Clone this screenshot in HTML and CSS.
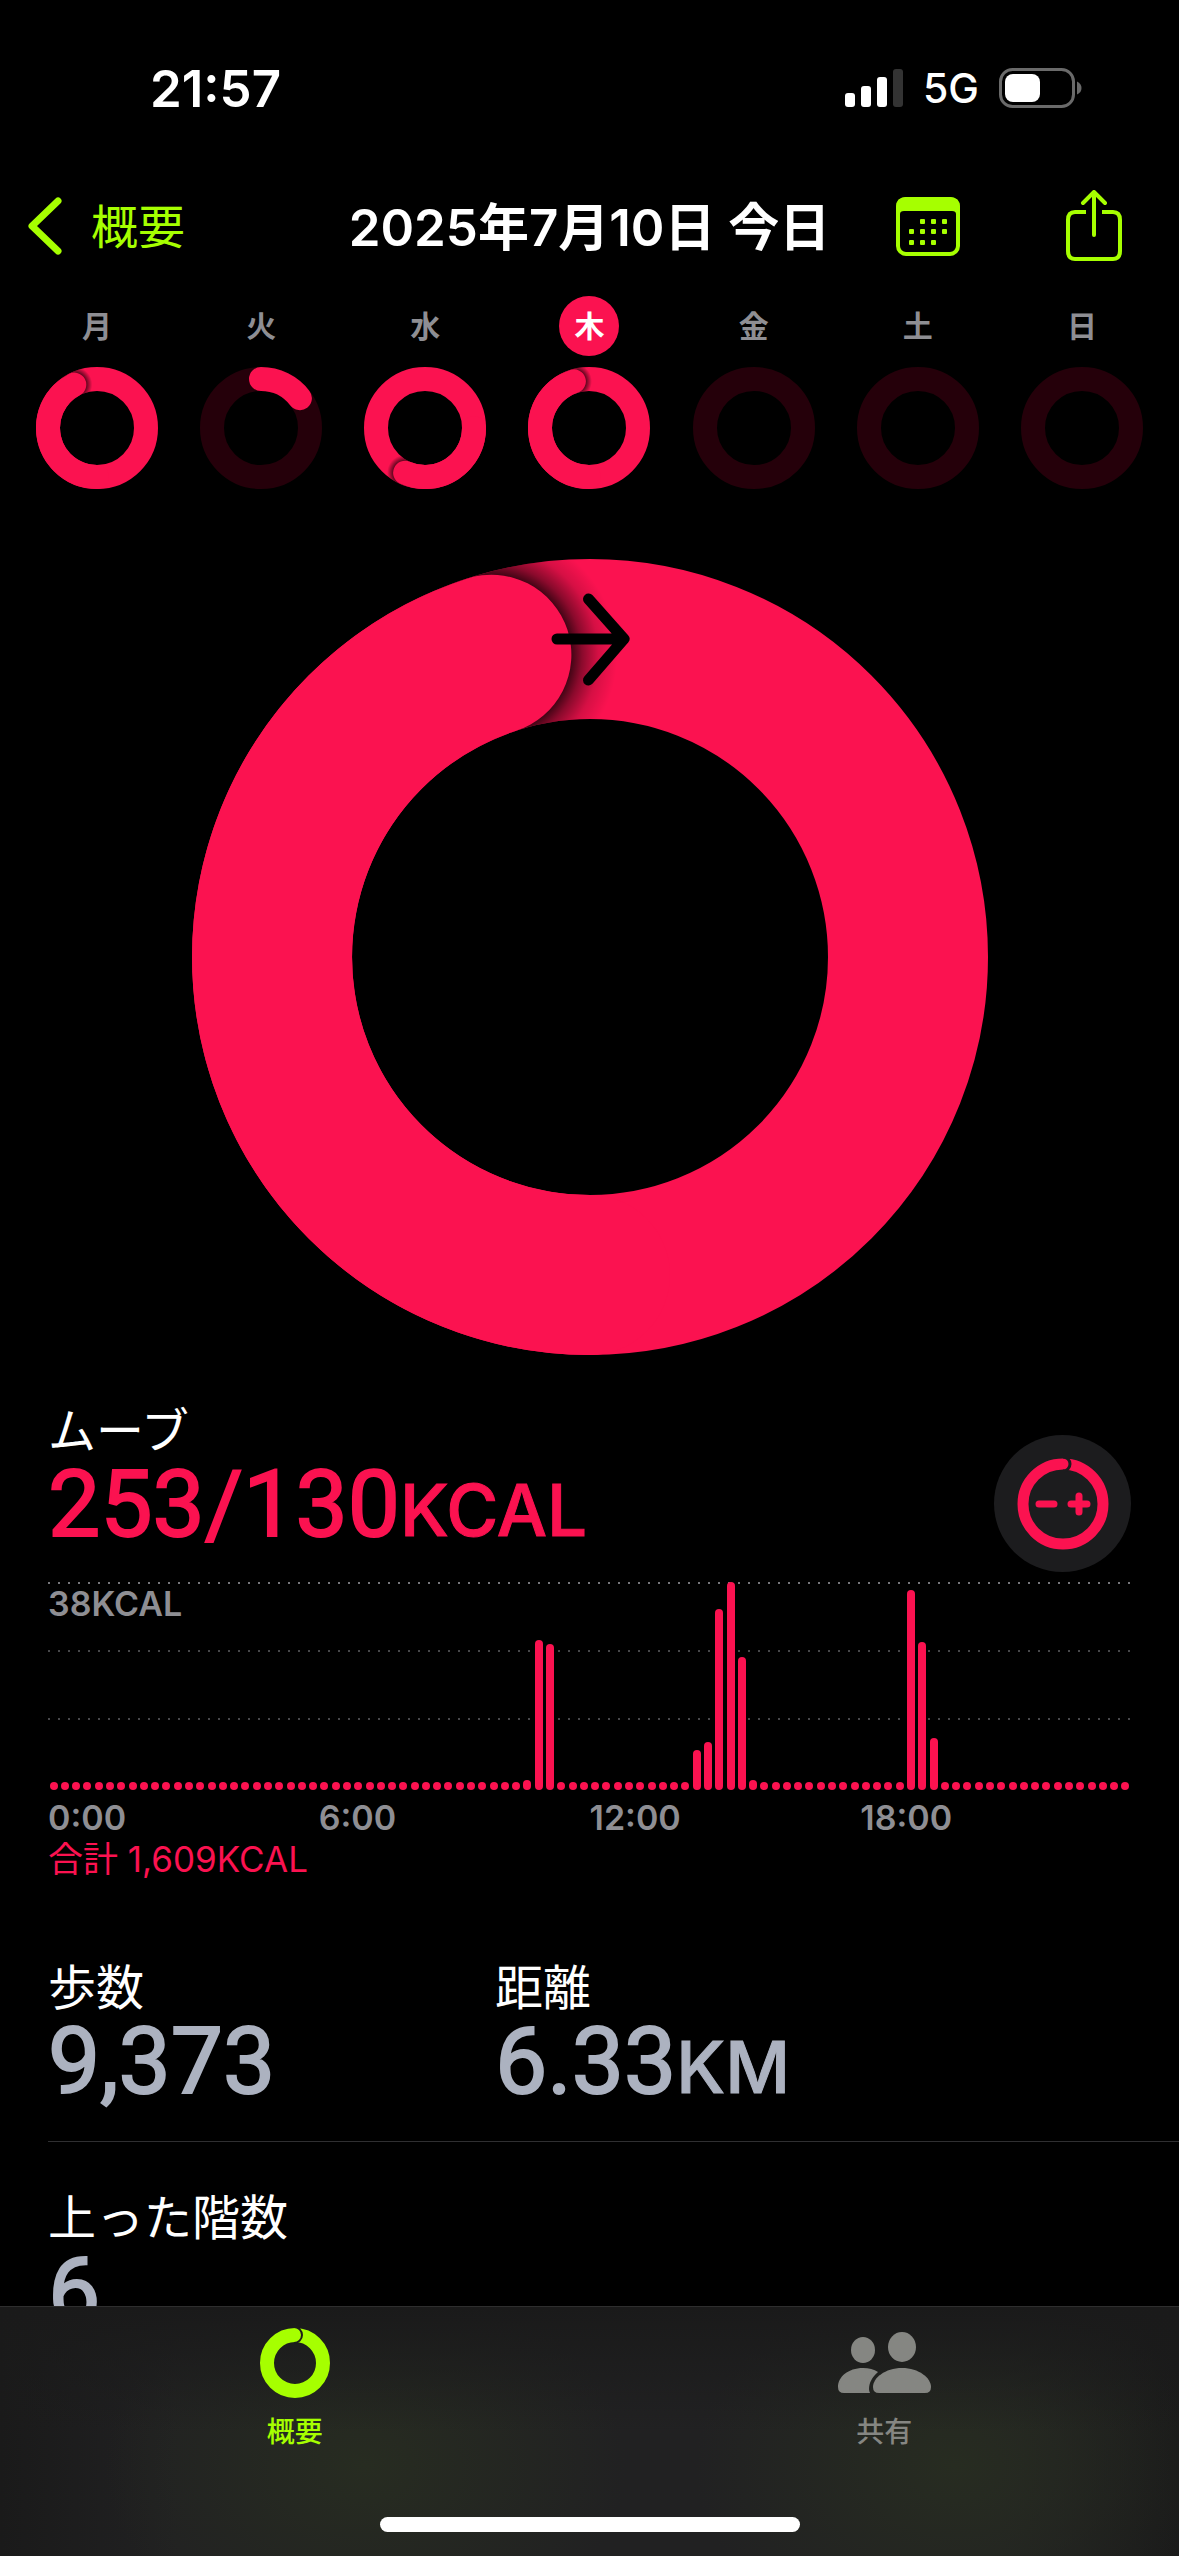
FILE: index.html
```html
<!DOCTYPE html>
<html lang="ja">
<head>
    <meta charset="UTF-8">
    <meta name="viewport" content="width=device-width, initial-scale=1.0">
    <title>フィットネス</title>
    <link rel="stylesheet" href="styles.css">
</head>
<body>
<div class="app">
    <!-- Status bar -->
    <div class="status-bar">
        <span class="clock">21:57</span>
        <div class="status-icons">
            <svg class="signal" width="58" height="38" viewBox="0 0 58 38" aria-hidden="true">
                <rect x="0" y="24" width="10" height="14" rx="3" fill="#fff"/>
                <rect x="16" y="17" width="10" height="21" rx="3" fill="#fff"/>
                <rect x="32" y="8" width="10" height="30" rx="3" fill="#fff"/>
                <rect x="48" y="0" width="10" height="38" rx="3" fill="#333"/>
            </svg>
            <span class="network">5G</span>
            <svg class="battery" width="84" height="40" viewBox="0 0 84 40" aria-hidden="true">
                <rect x="1.5" y="1.5" width="73" height="37" rx="12" fill="none" stroke="#6a6a6a" stroke-width="3"/>
                <rect x="6" y="6" width="35" height="28" rx="8" fill="#fff"/>
                <path d="M78 13.500q4.500 2 4.500 6.500t-4.500 6.500z" fill="#6a6a6a"/>
            </svg>
        </div>
    </div>

    <!-- Navigation -->
    <header class="nav">
        <a class="back" href="#">
            <svg width="36" height="60" viewBox="0 0 36 60" aria-hidden="true">
                <path d="M31 5L5 30l26 25" fill="none" stroke="currentColor" stroke-width="7" stroke-linecap="round" stroke-linejoin="round"/>
            </svg>
            <span>概要</span>
        </a>
        <h1 class="title">2025年7月10日 今日</h1>
        <div class="nav-actions">
            <button class="icon-button" aria-label="カレンダー">
                <svg width="66" height="72" viewBox="0 0 66 72" aria-hidden="true">
                    <rect x="3" y="9" width="60" height="55" rx="8" fill="none" stroke="currentColor" stroke-width="4"/>
                    <path d="M1 25v-8Q1 7 11 7h44q10 0 10 10v8l-4-1q0-3-4-3H9q-4 0-4 3z" fill="currentColor"/>
                    <g fill="currentColor">
                        <rect x="25" y="29" width="5" height="5" rx="1"/><rect x="36" y="29" width="5" height="5" rx="1"/><rect x="47" y="29" width="5" height="5" rx="1"/>
                        <rect x="14" y="39" width="5" height="5" rx="1"/><rect x="25" y="39" width="5" height="5" rx="1"/><rect x="36" y="39" width="5" height="5" rx="1"/><rect x="47" y="39" width="5" height="5" rx="1"/>
                        <rect x="14" y="50" width="5" height="5" rx="1"/><rect x="25" y="50" width="5" height="5" rx="1"/><rect x="36" y="50" width="5" height="5" rx="1"/>
                    </g>
                </svg>
            </button>
            <button class="icon-button" aria-label="共有">
                <svg width="58" height="72" viewBox="0 0 58 72" aria-hidden="true">
                    <g fill="none" stroke="currentColor" stroke-width="4" stroke-linejoin="round">
                        <path d="M21 22H10q-7 0-7 8v31q0 8 7 8h38q7 0 7-8V30q0-8-7-8H37"/>
                        <path d="M29 45V3M18 13L29 2l11 11" stroke-linecap="round"/>
                    </g>
                </svg>
            </button>
        </div>
    </header>

    <main class="content">
        <!-- Week -->
        <ol class="week">
            <li class="day">
                <span class="day-name">月</span>
                <svg class="mini-ring" viewBox="0 0 122 122" aria-hidden="true">
                    <defs>
                        <radialGradient id="shade-mon" gradientUnits="userSpaceOnUse" cx="38.300" cy="17.600" r="18">
                            <stop offset="0.650" stop-color="#000" stop-opacity="0.650"/>
                            <stop offset="1" stop-color="#000" stop-opacity="0"/>
                        </radialGradient>
                    </defs>
                    <circle class="ring-full" cx="61" cy="61" r="49"/>
                    <circle cx="61" cy="61" r="49" fill="none" stroke="url(#shade-mon)" stroke-width="24"/>
                    <path class="ring-arc" d="M61 110A49 49 0 0 1 38.300 17.600"/>
                </svg>
            </li>
            <li class="day">
                <span class="day-name">火</span>
                <svg class="mini-ring" viewBox="0 0 122 122" aria-hidden="true">
                    <circle class="ring-track" cx="61" cy="61" r="49"/>
                    <path class="ring-arc" d="M61 12A49 49 0 0 1 99.900 31.200"/>
                </svg>
            </li>
            <li class="day">
                <span class="day-name">水</span>
                <svg class="mini-ring" viewBox="0 0 122 122" aria-hidden="true">
                    <defs>
                        <radialGradient id="shade-wed" gradientUnits="userSpaceOnUse" cx="41.100" cy="105.800" r="18">
                            <stop offset="0.650" stop-color="#000" stop-opacity="0.650"/>
                            <stop offset="1" stop-color="#000" stop-opacity="0"/>
                        </radialGradient>
                    </defs>
                    <circle class="ring-full" cx="61" cy="61" r="49"/>
                    <circle cx="61" cy="61" r="49" fill="none" stroke="url(#shade-wed)" stroke-width="24"/>
                    <path class="ring-arc" d="M110 61A49 49 0 0 1 41.100 105.800"/>
                </svg>
            </li>
            <li class="day today">
                <span class="day-name">木</span>
                <svg class="mini-ring" viewBox="0 0 122 122" aria-hidden="true">
                    <defs>
                        <radialGradient id="shade-thu" gradientUnits="userSpaceOnUse" cx="45.900" cy="14.400" r="18">
                            <stop offset="0.650" stop-color="#000" stop-opacity="0.650"/>
                            <stop offset="1" stop-color="#000" stop-opacity="0"/>
                        </radialGradient>
                    </defs>
                    <circle class="ring-full" cx="61" cy="61" r="49"/>
                    <circle cx="61" cy="61" r="49" fill="none" stroke="url(#shade-thu)" stroke-width="24"/>
                    <path class="ring-arc" d="M61 110A49 49 0 0 1 45.900 14.400"/>
                </svg>
            </li>
            <li class="day">
                <span class="day-name">金</span>
                <svg class="mini-ring" viewBox="0 0 122 122" aria-hidden="true"><circle class="ring-track" cx="61" cy="61" r="49"/></svg>
            </li>
            <li class="day">
                <span class="day-name">土</span>
                <svg class="mini-ring" viewBox="0 0 122 122" aria-hidden="true"><circle class="ring-track" cx="61" cy="61" r="49"/></svg>
            </li>
            <li class="day">
                <span class="day-name">日</span>
                <svg class="mini-ring" viewBox="0 0 122 122" aria-hidden="true"><circle class="ring-track" cx="61" cy="61" r="49"/></svg>
            </li>
        </ol>

        <!-- Move ring -->
        <svg class="move-ring" viewBox="0 0 796 796" role="img" aria-label="ムーブリング">
            <defs>
                <radialGradient id="shade-big" gradientUnits="userSpaceOnUse" cx="299.400" cy="95.700" r="126">
                    <stop offset="0.630" stop-color="#000" stop-opacity="0.750"/>
                    <stop offset="0.720" stop-color="#000" stop-opacity="0.450"/>
                    <stop offset="0.850" stop-color="#000" stop-opacity="0.150"/>
                    <stop offset="1" stop-color="#000" stop-opacity="0"/>
                </radialGradient>
            </defs>
            <circle cx="398" cy="398" r="318" fill="none" stroke="#fb1250" stroke-width="160"/>
            <circle cx="398" cy="398" r="318" fill="none" stroke="url(#shade-big)" stroke-width="160"/>
            <path d="M398 716A318 318 0 0 1 299.400 95.700" fill="none" stroke="#fb1250" stroke-width="160" stroke-linecap="round"/>
            <path d="M365 80h67M396.500 40L432 80l-35.500 41" fill="none" stroke="#000" stroke-width="11" stroke-linecap="round" stroke-linejoin="round"/>
        </svg>

        <!-- Move summary -->
        <section class="move">
            <div class="move-head">
                <div>
                    <h2 class="label">ムーブ</h2>
                    <p class="value value-move">253/130<span class="unit">KCAL</span></p>
                </div>
                <button class="goal-button" aria-label="ゴールを変更">
                    <svg width="92" height="92" viewBox="0 0 92 92" aria-hidden="true">
                        <circle cx="46" cy="46" r="40" fill="none" stroke="#fb1250" stroke-width="11"/>
                        <path d="M46-1a7 7 0 0 1 0 14" fill="none" stroke="#1c1c1e" stroke-width="3"/>
                        <path d="M22 46h15M54 46h16M62 38v16" stroke="#fb1250" stroke-width="7" stroke-linecap="round"/>
                    </svg>
                </button>
            </div>

            <div class="chart">
                <span class="chart-max">38KCAL</span>
                <div class="bars" id="bars"></div>
            </div>
            <div class="hours">
                <span>0:00</span>
                <span>6:00</span>
                <span>12:00</span>
                <span>18:00</span>
            </div>
            <p class="total">合計 1,609KCAL</p>
        </section>

        <!-- Other metrics -->
        <section class="metrics">
            <div class="metric-row">
                <div class="metric">
                    <h2 class="label">歩数</h2>
                    <p class="value">9,373</p>
                </div>
                <div class="metric">
                    <h2 class="label">距離</h2>
                    <p class="value">6.33<span class="unit">KM</span></p>
                </div>
            </div>
            <div class="metric-row">
                <div class="metric">
                    <h2 class="label">上った階数</h2>
                    <p class="value">6</p>
                </div>
            </div>
        </section>
    </main>

    <!-- Tab bar -->
    <footer class="tab-bar">
        <nav class="tabs">
            <a class="tab active" href="#">
                <svg width="72" height="72" viewBox="0 0 72 72" aria-hidden="true">
                    <circle cx="36" cy="36" r="28" fill="none" stroke="currentColor" stroke-width="14"/>
                    <path d="M35 0a8 8 0 0 1 0 16" fill="none" stroke="#1d1e1b" stroke-width="2"/>
                </svg>
                <span>概要</span>
            </a>
            <a class="tab" href="#">
                <svg width="96" height="72" viewBox="0 0 96 72" aria-hidden="true">
                    <g fill="currentColor">
                        <ellipse cx="27" cy="23" rx="12" ry="13"/>
                        <ellipse cx="66" cy="20" rx="14" ry="15"/>
                        <path d="M8 66q-6 0-6-6c0-10 10-19 25-19 6 0 11 1.500 15 4-6 5-9 11-9 17q0 2 1 4z"/>
                        <path d="M43 66q-6 0-6-6c0-9 12-19 29-19s29 10 29 19q0 6-6 6z"/>
                    </g>
                </svg>
                <span>共有</span>
            </a>
        </nav>
        <div class="home-indicator"></div>
    </footer>
</div>

<script>
    // Energy per 15 minutes as % of the highest bar, quiet slots stay at 0
    const energy = new Array(96).fill(0);
    Object.assign(energy, {
        42: 5, 43: 72, 44: 70,
        57: 19, 58: 23, 59: 87, 60: 100, 61: 64, 62: 5,
        76: 96, 77: 71, 78: 25
    });

    const bars = document.getElementById('bars');
    energy.forEach(value => {
        const bar = document.createElement('div');
        bar.className = 'bar';
        bar.style.height = value + '%';
        bars.appendChild(bar);
    });
</script>
</body>
</html>
```
FILE: styles.css
```css
:root {
    --move: #fb1250;
    --track: #25000a;
    --green: #a6ff00;
    --gray: #8e8e93;
    --metric: #acb2c0;
    --side: 48px;
}

* {
    box-sizing: border-box;
}
body {
    margin: 0;
    background-color: #000;
    color: #fff;
    font-family: Inter, "Noto Sans CJK JP", sans-serif;
}
h1, h2, p, ol {
    margin: 0;
    padding: 0;
    font-weight: 400;
}
a {
    color: inherit;
    text-decoration: none;
}
button {
    border: 0;
    padding: 0;
    background: none;
    color: inherit;
    cursor: pointer;
}
svg {
    display: block;
}
.app {
    height: 100vh;
    display: flex;
    flex-direction: column;
    overflow: hidden;
}

/* Status bar */
.status-bar {
    display: flex;
    justify-content: space-between;
    align-items: center;
    height: 176px;
    padding: 0 96px 0 150px;
    flex-shrink: 0;
}
.clock {
    font-size: 51px;
    font-weight: 600;
}
.status-icons {
    display: flex;
    align-items: center;
    gap: 20px;
}
.network {
    font-size: 41px;
    font-weight: 500;
}

/* Navigation */
.nav {
    display: grid;
    grid-template-columns: 1fr auto 1fr;
    align-items: center;
    height: 100px;
    padding: 0 27px;
    flex-shrink: 0;
}
.back {
    display: flex;
    align-items: center;
    gap: 28px;
    color: var(--green);
    font-size: 47px;
}
.back span, .title {
    padding-bottom: 5px;
}
.title {
    font-size: 51px;
    font-weight: 600;
    white-space: nowrap;
}
.nav-actions {
    display: flex;
    justify-content: flex-end;
    gap: 104px;
    padding-right: 29px;
    color: var(--green);
}

.content {
    flex: 1;
    min-height: 0;
    overflow: hidden;
}

/* Week */
.week {
    display: grid;
    grid-template-columns: repeat(7, 1fr);
    padding: 20px 15px 0;
    list-style: none;
}
.day {
    display: flex;
    flex-direction: column;
    align-items: center;
    gap: 11px;
}
.day-name {
    width: 60px;
    height: 60px;
    line-height: 60px;
    border-radius: 50%;
    text-align: center;
    font-size: 30px;
    font-weight: 600;
    color: var(--gray);
}
.today .day-name {
    background-color: var(--move);
    color: #fff;
}
.mini-ring {
    width: 122px;
    height: 122px;
}
.ring-full, .ring-track, .ring-arc {
    fill: none;
    stroke: var(--move);
    stroke-width: 24;
}
.ring-track {
    stroke: var(--track);
}
.ring-arc {
    stroke-linecap: round;
}

.move-ring {
    width: 796px;
    max-width: 100%;
    margin: 70px auto 0;
}

/* Move summary */
.move {
    padding: 40px var(--side) 0;
}
.move-head {
    display: flex;
    justify-content: space-between;
    align-items: flex-end;
}
.label {
    font-size: 48px;
    line-height: 72px;
}
.value {
    font-family: Roboto, sans-serif;
    font-size: 93px;
    line-height: 76px;
    font-weight: 400;
    -webkit-text-stroke: 2px currentColor;
    color: var(--metric);
}
.value-move {
    padding-bottom: 24px;
    color: var(--move);
}
.unit {
    font-family: Inter, sans-serif;
    font-size: 71px;
    font-weight: 500;
    -webkit-text-stroke: 1px currentColor;
}
.goal-button {
    display: flex;
    align-items: center;
    justify-content: center;
    width: 137px;
    height: 137px;
    border-radius: 50%;
    background-color: #1c1c1e;
}

/* Chart */
.chart {
    height: 208px;
    margin-top: 10px;
    background-image:
        linear-gradient(90deg, #77777b 2px, transparent 2px),
        linear-gradient(90deg, #48484b 2px, transparent 2px),
        linear-gradient(90deg, #48484b 2px, transparent 2px);
    background-size: 10px 2px;
    background-repeat: repeat-x;
    background-position: 0 0, 0 68px, 0 136px;
    display: grid;
}
.chart-max {
    grid-area: 1 / 1;
    font-size: 34px;
    line-height: 44px;
    font-weight: 600;
    color: var(--gray);
}
.bars {
    grid-area: 1 / 1;
    display: grid;
    grid-template-columns: repeat(96, 1fr);
    align-items: end;
    justify-items: center;
    height: 208px;
}
.bar {
    width: 8px;
    min-height: 8px;
    border-radius: 4px;
    background-color: var(--move);
}
.hours {
    display: grid;
    grid-template-columns: repeat(4, 1fr);
    margin-top: 8px;
    font-size: 34px;
    line-height: 40px;
    font-weight: 600;
    color: var(--gray);
}
.total {
    font-size: 35px;
    line-height: 42px;
    color: var(--move);
}

/* Metrics */
.metrics {
    padding: 72px 0 0 var(--side);
}
.metric-row {
    display: grid;
    grid-template-columns: 447px 1fr;
    padding-bottom: 36px;
}
.metric-row + .metric-row {
    padding-top: 40px;
    border-top: 1px solid #2f2f31;
}

/* Tab bar */
.tab-bar {
    display: flex;
    flex-direction: column;
    justify-content: space-between;
    align-items: center;
    height: 250px;
    padding: 20px 0 24px;
    flex-shrink: 0;
    border-top: 1px solid #2e2e2e;
    background:
        linear-gradient(#1a1a1a, transparent 50%),
        radial-gradient(ellipse 260px 190px at 31% 64%, #272c21, transparent),
        radial-gradient(ellipse 260px 190px at 81% 64%, #272c21, transparent),
        linear-gradient(90deg, #1a1a1a, #212122 15%, #212122 85%, #1a1a1a);
}
.tabs {
    display: grid;
    grid-template-columns: 1fr 1fr;
    width: 100%;
}
.tab {
    display: flex;
    flex-direction: column;
    align-items: center;
    gap: 12px;
    font-size: 28px;
    line-height: 42px;
    font-weight: 500;
    color: #858682;
}
.tab.active {
    color: var(--green);
}
.home-indicator {
    width: 420px;
    height: 15px;
    border-radius: 8px;
    background-color: #fff;
}
```
